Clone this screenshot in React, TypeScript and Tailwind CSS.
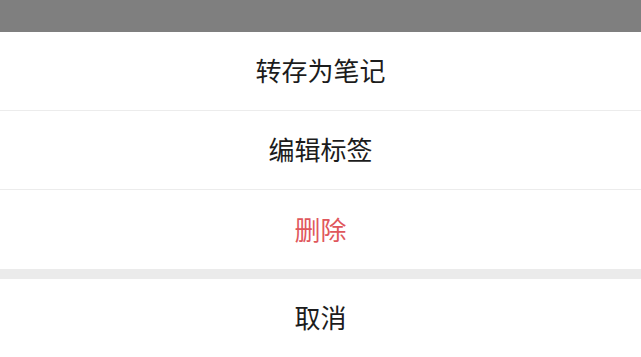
import React from "react";

const font = { fontFamily: '"Noto Sans CJK SC", "Noto Sans", sans-serif' };

function Row({ label, danger, last }: { label: string; danger?: boolean; last?: boolean }) {
  return (
    <div
      className={`h-[79px] flex items-center justify-center bg-white ${last ? "" : "border-b border-[#ececec]"}`}
    >
      <span className={`text-[26px] leading-none -mt-[2px] ${danger ? "text-[#e0575c]" : "text-[#1c1c1c]"}`}>{label}</span>
    </div>
  );
}

export default function App() {
  return (
    <div className="w-[641px] h-[357px] overflow-hidden flex flex-col bg-white" style={font}>
      <div className="h-[32px] bg-[#7f7f7f]" />
      <Row label="转存为笔记" />
      <Row label="编辑标签" />
      <Row label="删除" danger last />
      <div className="h-[10px] bg-[#ebebeb]" />
      <div className="flex-1 flex items-center justify-center bg-white">
        <span className="text-[26px] leading-none -mt-[2px] text-[#1c1c1c]">取消</span>
      </div>
    </div>
  );
}
